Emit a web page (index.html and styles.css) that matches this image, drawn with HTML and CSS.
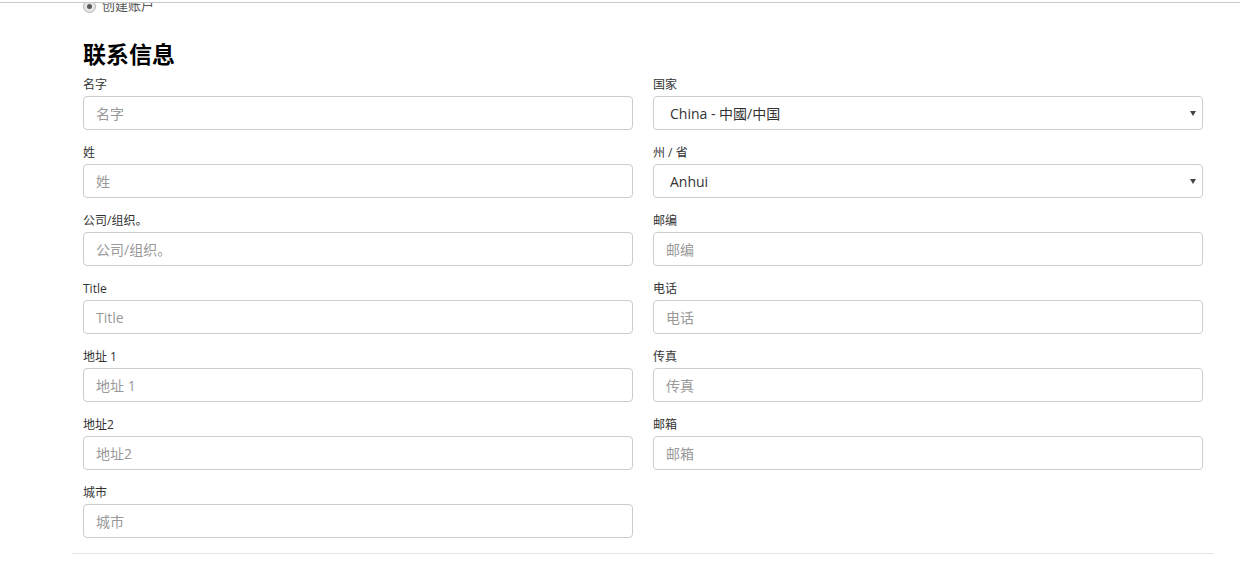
FILE: index.html
```html
<!DOCTYPE html>
<html lang="zh-CN">
<head>
<meta charset="utf-8">
<title>联系信息</title>
<link rel="stylesheet" href="styles.css">
</head>
<body>
<div class="topbar"></div>
<div class="page">
  <div class="inner">
    <label class="radio-row"><span class="radio"><span class="dot"></span></span><span class="radio-text">创建账户</span></label>
    <h2 class="heading">联系信息</h2>
    <div class="grid">
      <div class="col">
        <div class="group"><label class="lbl">名字</label><input class="field" type="text" placeholder="名字"></div>
        <div class="group"><label class="lbl">姓</label><input class="field" type="text" placeholder="姓"></div>
        <div class="group"><label class="lbl">公司/组织。</label><input class="field" type="text" placeholder="公司/组织。"></div>
        <div class="group"><label class="lbl">Title</label><input class="field" type="text" placeholder="Title"></div>
        <div class="group"><label class="lbl">地址 1</label><input class="field" type="text" placeholder="地址 1"></div>
        <div class="group"><label class="lbl">地址2</label><input class="field" type="text" placeholder="地址2"></div>
        <div class="group"><label class="lbl">城市</label><input class="field" type="text" placeholder="城市"></div>
      </div>
      <div class="col">
        <div class="group"><label class="lbl">国家</label>
          <div class="select-wrap"><select class="field select"><option>China - 中國/中国</option></select><span class="arrow"></span></div>
        </div>
        <div class="group"><label class="lbl">州 / 省</label>
          <div class="select-wrap"><select class="field select"><option>Anhui</option></select><span class="arrow"></span></div>
        </div>
        <div class="group"><label class="lbl">邮编</label><input class="field" type="text" placeholder="邮编"></div>
        <div class="group"><label class="lbl">电话</label><input class="field" type="text" placeholder="电话"></div>
        <div class="group"><label class="lbl">传真</label><input class="field" type="text" placeholder="传真"></div>
        <div class="group"><label class="lbl">邮箱</label><input class="field" type="text" placeholder="邮箱"></div>
      </div>
    </div>
  </div>
  <hr class="rule">
</div>
</body>
</html>
```

FILE: styles.css
```css
html, body {
  margin: 0;
  padding: 0;
  background: #fff;
  font-family: "Open Sans", "Noto Sans CJK SC", sans-serif;
  color: #333;
  overflow: hidden;
}

.topbar {
  position: absolute;
  top: 0;
  left: 0;
  right: 0;
  height: 2px;
  background: #fff;
  border-bottom: 1px solid #c8c8c8;
  z-index: 5;
}

.page {
  margin-left: 72px;
  width: 1142px;
}

.inner {
  padding: 0 11px;
}

.radio-row {
  display: flex;
  align-items: center;
  height: 20px;
  margin-top: -4px;
  margin-bottom: 24px;
  gap: 6px;
  font-size: 13px;
  color: #555;
}

.radio-text {
  position: relative;
  top: -2px;
}

.radio {
  width: 11px;
  height: 11px;
  border: 1px solid #b5b5b5;
  border-radius: 50%;
  background: #e6e6e6;
  display: flex;
  align-items: center;
  justify-content: center;
}

.dot {
  width: 5px;
  height: 5px;
  border-radius: 50%;
  background: #5a5a5a;
}

.heading {
  margin: 1px 0 10px;
  font-size: 23px;
  line-height: 26px;
  font-weight: 700;
  color: #000;
  font-family: "Noto Sans CJK SC", "Open Sans", sans-serif;
}

.grid {
  display: grid;
  grid-template-columns: 1fr 1fr;
  column-gap: 20px;
}

.group {
  display: flex;
  flex-direction: column;
  margin-bottom: 14px;
}

.lbl {
  font-size: 12px;
  line-height: 18px;
  margin-bottom: 2px;
  color: #333;
}

.field {
  box-sizing: border-box;
  width: 100%;
  height: 34px;
  margin: 0;
  padding: 0 12px;
  border: 1px solid #ccc;
  border-radius: 4px;
  background: #fff;
  font-family: "Open Sans", "Noto Sans CJK SC", sans-serif;
  font-size: 14px;
  color: #333;
  outline: none;
}

.field::placeholder {
  color: #999;
}

.select-wrap {
  position: relative;
}

.select {
  appearance: none;
  -webkit-appearance: none;
  padding-left: 16px;
}

.arrow {
  position: absolute;
  right: 7px;
  top: 15px;
  width: 0;
  height: 0;
  border-left: 3px solid transparent;
  border-right: 3px solid transparent;
  border-top: 5px solid #444;
  pointer-events: none;
}

.rule {
  margin: 1px 0 0;
  border: 0;
  border-top: 1px solid #e5e5e5;
  height: 0;
}
```
